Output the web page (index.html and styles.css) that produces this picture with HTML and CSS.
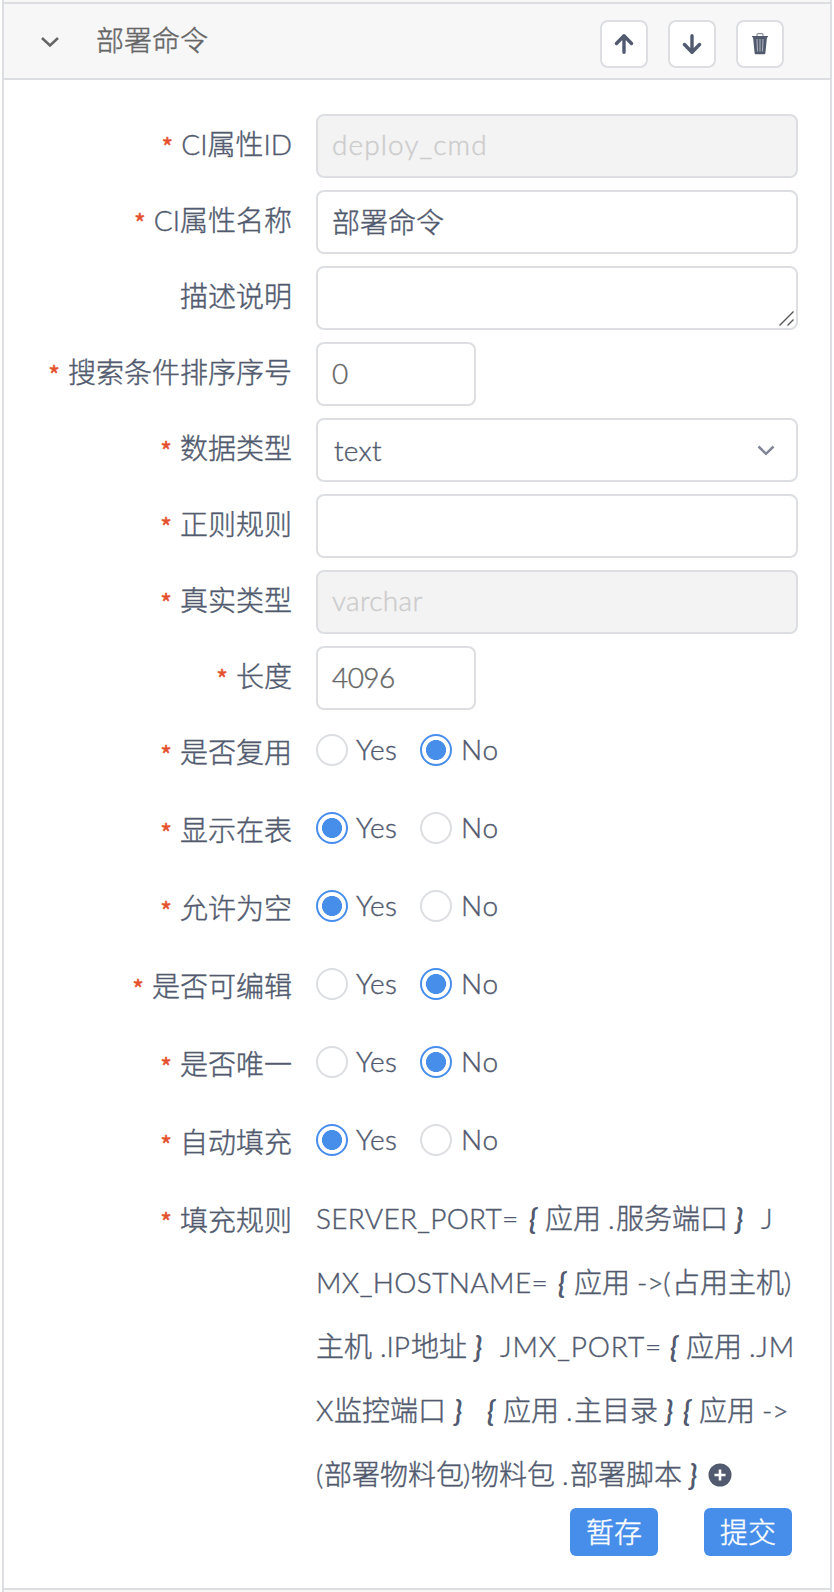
FILE: index.html
```html
<!DOCTYPE html>
<html lang="zh-CN">
<head>
<meta charset="utf-8">
<title>部署命令</title>
<link rel="stylesheet" href="styles.css">
</head>
<body>
<main class="panel">
  <header class="head">
    <svg class="chev" viewBox="0 0 20 12"><path d="M2 2l8 7.500 8-7.500"/></svg>
    <h1 class="title">部署命令</h1>
    <div class="tools">
      <button class="tool"><svg viewBox="0 0 20 20"><path class="arrow" d="M10 18.200V2M2.500 9.500L10 1.800 17.500 9.500"/></svg></button>
      <button class="tool"><svg viewBox="0 0 20 20"><path class="arrow" d="M10 1.800V18M2.500 10.500L10 18.200 17.500 10.500"/></svg></button>
      <button class="tool"><svg class="bin" viewBox="0 0 16 22"><path class="rim" d="M5 3V1.500Q5 .7 6 .7h4q1 0 1 .8V3"/><path class="lid" d="M0 3h16v1.200H0z"/><path class="can" d="M1 4h14l-1.600 16q-.1 1.200-1.300 1.200H3.900q-1.200 0-1.300-1.200z"/><path class="slots" d="M5 6l.6 12.500M8 6v12.500M11 6l-.6 12.500"/></svg></button>
    </div>
  </header>
  <form class="form">
    <div class="row"><label class="label req">CI属性ID</label><div class="box off">deploy_cmd</div></div>
    <div class="row"><label class="label req">CI属性名称</label><div class="box">部署命令</div></div>
    <div class="row"><label class="label">描述说明</label><div class="box area"><svg class="grip" viewBox="0 0 15 15"><path d="M.5 14.500L14.500 .5M8.500 14.500l6-6"/></svg></div></div>
    <div class="row"><label class="label req">搜索条件排序序号</label><div class="box num">0</div></div>
    <div class="row"><label class="label req">数据类型</label><div class="box select"><span>text</span><svg class="caret" viewBox="0 0 18 11"><path d="M1.500 1.500L9 8.800l7.500-7.300"/></svg></div></div>
    <div class="row"><label class="label req">正则规则</label><div class="box"></div></div>
    <div class="row"><label class="label req">真实类型</label><div class="box off vc">varchar</div></div>
    <div class="row"><label class="label req">长度</label><div class="box num">4096</div></div>
    <div class="row pick"><label class="label req">是否复用</label><span class="radio"></span><span class="opt">Yes</span><span class="radio on"></span><span class="opt no">No</span></div>
    <div class="row pick"><label class="label req">显示在表</label><span class="radio on"></span><span class="opt">Yes</span><span class="radio"></span><span class="opt no">No</span></div>
    <div class="row pick"><label class="label req">允许为空</label><span class="radio on"></span><span class="opt">Yes</span><span class="radio"></span><span class="opt no">No</span></div>
    <div class="row pick"><label class="label req">是否可编辑</label><span class="radio"></span><span class="opt">Yes</span><span class="radio on"></span><span class="opt no">No</span></div>
    <div class="row pick"><label class="label req">是否唯一</label><span class="radio"></span><span class="opt">Yes</span><span class="radio on"></span><span class="opt no">No</span></div>
    <div class="row pick"><label class="label req">自动填充</label><span class="radio on"></span><span class="opt">Yes</span><span class="radio"></span><span class="opt no">No</span></div>
    <div class="row rule"><label class="label req">填充规则</label>
      <div class="expr">
        <div class="line"><span class="seg server">SERVER_PORT=</span><b class="seg open">{</b><span class="seg app">应用</span><span class="seg dot">.</span><span class="seg c4">服务端口</span><b class="seg close">}</b><span class="seg">J</span></div>
        <div class="line"><span class="seg host">MX_HOSTNAME=</span><b class="seg open">{</b><span class="seg app">应用</span><span class="seg arr">-&gt;(</span><span class="seg c4x">占用主机</span><span class="seg">)</span></div>
        <div class="line"><span class="seg c2">主机</span><span class="seg ip">.IP</span><span class="seg c2x">地址</span><b class="seg close">}</b><span class="seg jmx">JMX_PORT=</span><b class="seg open">{</b><span class="seg app appw">应用</span><span class="seg jm">.JM</span></div>
        <div class="line"><span class="seg x">X</span><span class="seg c4y">监控端口</span><b class="seg closew">}</b><b class="seg open">{</b><span class="seg app">应用</span><span class="seg dot">.</span><span class="seg c3">主目录</span><b class="seg closen">}</b><b class="seg open">{</b><span class="seg app">应用</span><span class="seg">-&gt;</span></div>
        <div class="line"><span class="seg par">(</span><span class="seg c5">部署物料包</span><span class="seg par">)</span><span class="seg c3w">物料包</span><span class="seg dot">.</span><span class="seg c4">部署脚本</span><b class="seg closeadd">}</b><svg class="add" viewBox="0 0 24 24"><circle cx="12" cy="12" r="11.500"/><path d="M12 6.500v11M6.500 12h11"/></svg></div>
      </div>
    </div>
    <div class="actions"><button type="button" class="btn">暂存</button><button type="button" class="btn">提交</button></div>
  </form>
</main>
</body>
</html>
```
FILE: styles.css
```css
* { box-sizing: border-box; }
body {
  margin: 0;
  padding: 0 2px;
  height: 1592px;
  overflow: hidden;
  background: #fff;
  color: #515a6e;
  font: 300 28px/40px Lato, "Noto Sans CJK SC", sans-serif;
  -webkit-text-stroke: .4px;
}
.panel {
  height: 1592px;
  padding-top: 2px;
  border: solid #dcdee2;
  border-width: 0 2px;
  background: #f7f7f7;
}
.head {
  display: flex;
  align-items: center;
  height: 78px;
  padding: 0 46px 0 36px;
  border: solid #dcdee2;
  border-width: 2px 0;
  background: #f7f7f7;
}
.chev { width: 20px; height: 12px; margin: 2px 36px 0 0; }
.chev path { fill: none; stroke: #666; stroke-width: 2.5; }
.title { margin: 0 auto 2px 0; color: #666; font: inherit; }
.tools { display: flex; gap: 20px; margin-top: 6px; }
.tool {
  display: flex;
  align-items: center;
  justify-content: center;
  width: 48px;
  height: 48px;
  padding: 0;
  border: 2px solid #dcdee2;
  border-radius: 8px;
  background: #fff;
}
.tool svg { width: 20px; height: 20px; }
.tool .bin { width: 16px; height: 22px; }
.arrow { fill: none; stroke: #515a6e; stroke-width: 3.4; stroke-linecap: round; stroke-linejoin: round; }
.rim { fill: none; stroke: #8d93a0; stroke-width: 1.2; }
.lid, .can { fill: #515a6e; }
.slots { fill: none; stroke: #a5a9b3; stroke-width: 1.2; }
.form {
  display: flex;
  flex-direction: column;
  height: 1510px;
  padding: 34px 32px 0 0;
  border-bottom: 2px solid #dcdee2;
  background: #fff;
}
.row { display: flex; flex: none; align-items: center; height: 64px; margin-bottom: 12px; }
.label {
  display: flex;
  flex: 0 0 312px;
  align-items: center;
  justify-content: flex-end;
  padding: 0 24px 4px 0;
}
.req::before {
  content: "*";
  margin: 3px 8px 0 0;
  color: #e5502c;
  font: 400 25px/24px "Noto Sans CJK SC", sans-serif;
}
.box {
  display: flex;
  align-items: center;
  width: 482px;
  height: 64px;
  padding: 0 14px;
  border: 2px solid #dcdee2;
  border-radius: 8px;
  background: #fff;
}
.off { padding-bottom: 4px; background: #f3f3f3; color: #ccc; letter-spacing: 1.1px; }
.vc { letter-spacing: .3px; }
.num { width: 160px; padding-bottom: 2px; color: #666; letter-spacing: -.6px; }
.area { align-items: flex-end; justify-content: flex-end; padding: 0 2px 2px 0; }
.grip { width: 15px; height: 15px; }
.grip path { fill: none; stroke: #555; stroke-width: 1.4; }
.select { justify-content: space-between; padding: 0 21px 0 16px; letter-spacing: .3px; }
.caret { width: 18px; height: 11px; }
.caret path { fill: none; stroke: #808695; stroke-width: 2.5; }
.pick { height: 78px; margin: 0; }
.row:nth-child(9) { margin-top: -11px; }
.pick .label { padding: 4px 24px 0 0; }
.radio {
  flex: 0 0 32px;
  height: 32px;
  border: 2px solid #dcdee2;
  border-radius: 50%;
}
.on { border-color: #478eeb; background: radial-gradient(circle, #478eeb 9.700px, #fff 10.300px); }
.opt { width: 72px; padding: 0 0 2px 8px; letter-spacing: .3px; }
.no { padding-left: 9px; letter-spacing: .8px; }
.rule { align-items: flex-start; height: 329px; margin: 0; padding-top: 7px; }
.rule .label { height: 64px; padding: 3px 24px 0 0; }
.expr { display: flex; flex-direction: column; }
.line { display: flex; align-items: center; height: 64px; white-space: nowrap; }
.seg { flex: none; }
b.seg { font-style: italic; font-weight: 700; -webkit-text-stroke: 0; }
.server { width: 213px; letter-spacing: .3px; }
.host { width: 242px; letter-spacing: .4px; }
.jmx { width: 170px; letter-spacing: .9px; }
.open { width: 16px; }
.app { width: 63px; }
.dot { width: 8px; }
.c4 { width: 119px; }
.c4x { width: 112px; }
.c4y { width: 120px; }
.c5 { width: 139px; }
.c3 { width: 91px; }
.c3w { width: 91px; }
.c2 { width: 64px; }
.c2x { width: 63px; }
.arr { width: 35px; letter-spacing: -.2px; }
.ip { width: 31px; }
.jm { letter-spacing: .8px; }
.close { width: 26px; }
.closew { width: 33px; }
.closen { width: 18px; }
.closeadd { width: 19px; }
.x { width: 18px; }
.par { width: 8px; }
.add { width: 24px; height: 24px; margin-top: 2px; }
.add circle { fill: #515a6e; }
.add path { fill: none; stroke: #fff; stroke-width: 2.6; }
.actions { display: flex; justify-content: flex-end; gap: 46px; padding-right: 6px; }
.btn {
  width: 88px;
  height: 48px;
  padding: 0;
  border: 0;
  border-radius: 6px;
  background: #478eeb;
  color: #fff;
  font: 300 28px/40px Lato, "Noto Sans CJK SC", sans-serif;
}
```
